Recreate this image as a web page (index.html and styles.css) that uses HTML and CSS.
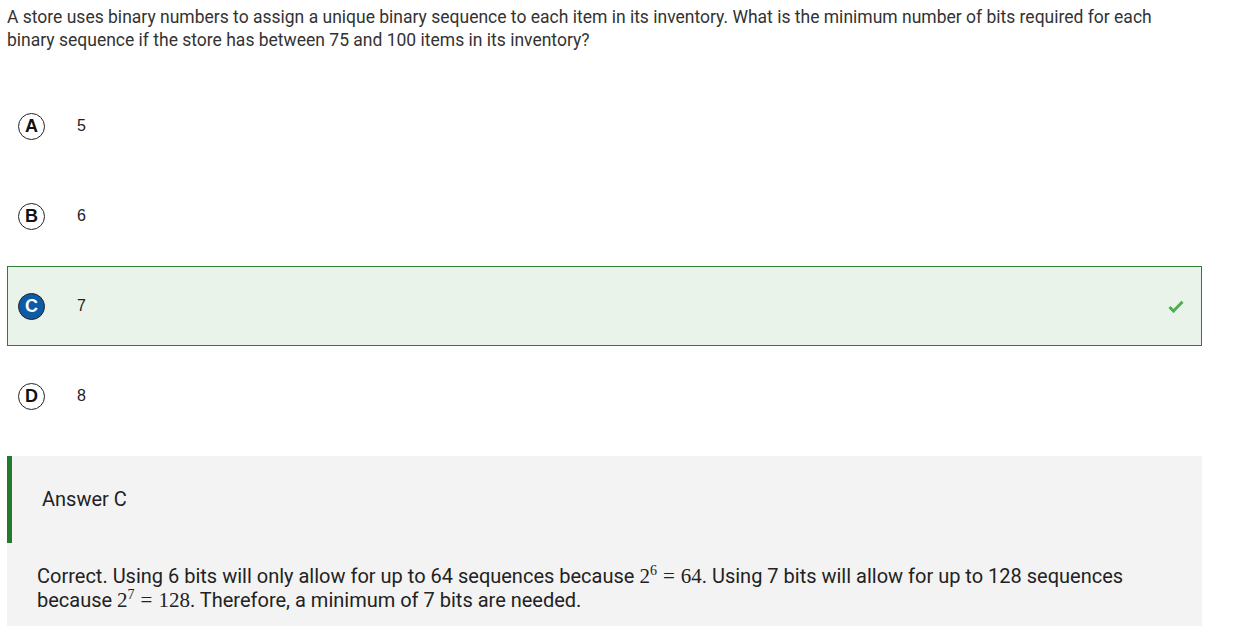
FILE: index.html
```html
<!DOCTYPE html>
<html>
<head>
<meta charset="utf-8">
<link rel="stylesheet" href="styles.css">
</head>
<body>
<div class="page">
  <p class="question">A store uses binary numbers to assign a unique binary sequence to each item in its inventory. What is the minimum number of bits required for each binary sequence if the store has between 75 and 100 items in its inventory?</p>
  <div class="options">
    <div class="option">
      <span class="badge">A</span><span class="value">5</span>
    </div>
    <div class="option">
      <span class="badge">B</span><span class="value">6</span>
    </div>
    <div class="option correct">
      <span class="badge selected">C</span><span class="value">7</span>
      <svg class="check" width="16" height="13" viewBox="0 0 16 13"><path d="M1.5 7 L5.5 11 L14.5 1.8" fill="none" stroke="#4caf50" stroke-width="3"/></svg>
    </div>
    <div class="option">
      <span class="badge">D</span><span class="value">8</span>
    </div>
  </div>
  <div class="answer">
    <div class="answer-head">Answer C</div>
    <p class="explain">Correct. Using 6 bits will only allow for up to 64 sequences because <span class="math">2<sup>6</sup><span class="eq">=</span>64</span>. Using 7 bits will allow for up to 128 sequences because <span class="math">2<sup>7</sup><span class="eq">=</span>128</span>. Therefore, a minimum of 7 bits are needed.</p>
  </div>
</div>
</body>
</html>
```
FILE: styles.css
```css
html, body { margin: 0; padding: 0; background: #fff; }
.page { padding: 6px 49px 0 7px; font-family: Roboto, "Liberation Sans", sans-serif; color: #333; }
.question { margin: 0; font-size: 17.5px; line-height: 23px; color: #333; }
.options { margin-top: 34px; display: flex; flex-direction: column; gap: 10px; }
.option { height: 80px; display: flex; align-items: center; box-sizing: border-box; border: 1px solid transparent; padding-left: 10px; }
.option.correct { background: #eaf3ea; border-color: #2e7d32; }
.badge { width: 27px; height: 27px; box-sizing: border-box; border: 1px solid #222; border-radius: 50%; display: flex; align-items: center; justify-content: center; font-family: "Liberation Sans", Arial, sans-serif; font-weight: bold; font-size: 18px; color: #111; }
.badge.selected { background: #0d5aa7; border-color: #222; color: #fff; }
.value { margin-left: 32px; font-family: "Liberation Sans", Arial, sans-serif; font-size: 16px; color: #222; }
.check { margin-left: auto; margin-right: 17px; }
.answer { margin-top: 20px; background: #f3f3f3; position: relative; padding: 31px 20px 14px 30px; width: 1195px; box-sizing: border-box; }
.answer::before { content: ""; position: absolute; left: 0; top: 0; width: 5px; height: 87px; background: #237a2e; }
.answer-head { font-size: 20px; line-height: 24px; margin-left: 5px; color: #222; }
.explain { margin: 53px 0 0 0; font-size: 20px; line-height: 24px; color: #222; }
.math { font-family: "Liberation Serif", "DejaVu Serif", serif; font-size: 21px; }
.math sup { font-size: 14px; line-height: 0; vertical-align: 8px; }
.eq { margin: 0 6px; }
```
